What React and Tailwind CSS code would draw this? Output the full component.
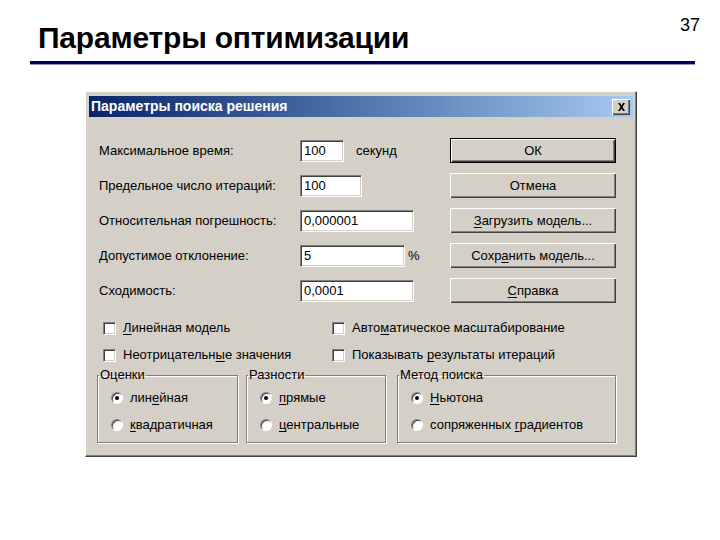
import React from 'react';

const font = { fontFamily: '"Liberation Sans", Arial, sans-serif' };

const sunken =
  'bg-white border border-t-[#808080] border-l-[#808080] border-r-white border-b-white shadow-[inset_1px_1px_0_#404040,inset_-1px_-1px_0_#d4d0c8]';

const Field = ({ value, width }) => (
  <div className={`h-[22px] ${width} ${sunken} flex items-center pl-[3px] text-[13px] leading-none`}>
    {value}
  </div>
);

const Button = ({ children, isDefault }) => (
  <div
    className={`ml-auto w-[166px] h-[25px] flex items-center justify-center text-[13px] bg-[#d4d0c8] ${
      isDefault
        ? 'border border-black shadow-[inset_1px_1px_0_#fff,inset_-1px_-1px_0_#404040,inset_-2px_-2px_0_#808080]'
        : 'shadow-[inset_1px_1px_0_#fff,inset_-1px_-1px_0_#404040,inset_-2px_-2px_0_#808080]'
    }`}
  >
    {children}
  </div>
);

const U = ({ children }) => <span className="underline underline-offset-2">{children}</span>;

const Check = ({ children }) => (
  <div className="flex items-center h-[18px]">
    <span className={`w-[13px] h-[13px] ml-[4px] mr-[7px] ${sunken}`} />
    <span className="text-[13px]">{children}</span>
  </div>
);

const Radio = ({ children, checked }) => (
  <div className="flex items-center h-[18px]">
    <span className="w-[12px] h-[12px] ml-[13px] mr-[7px] rounded-full bg-white border border-t-[#808080] border-l-[#808080] border-r-white border-b-white shadow-[inset_1px_1px_0_#404040] flex items-center justify-center">
      {checked && <span className="w-[4px] h-[4px] rounded-full bg-black" />}
    </span>
    <span className="text-[13px]">{children}</span>
  </div>
);

const Group = ({ title, width, children }) => (
  <fieldset
    className={`${width} h-[76px] border border-[#808080] shadow-[1px_1px_0_#fff,inset_1px_1px_0_#fff] pt-[6px] flex flex-col gap-[9px]`}
  >
    <legend className="ml-[1px] px-[1px] text-[13px] leading-[16px]">{title}</legend>
    {children}
  </fieldset>
);

const rows = [
  { label: 'Максимальное время:', value: '100', width: 'w-[44px]', suffix: 'секунд', gap: 'ml-[12px]', button: 'ОК', isDefault: true },
  { label: 'Предельное число итераций:', value: '100', width: 'w-[62px]', button: 'Отмена' },
  { label: 'Относительная погрешность:', value: '0,000001', width: 'w-[114px]', button: <><U>З</U>агрузить модель...</> },
  { label: 'Допустимое отклонение:', value: '5', width: 'w-[105px]', suffix: '%', gap: 'ml-[3px]', button: <>Сохр<U>а</U>нить модель...</> },
  { label: 'Сходимость:', value: '0,0001', width: 'w-[114px]', button: <><U>С</U>правка</> },
];

export default function App() {
  return (
    <div className="w-[720px] h-[540px] bg-white relative overflow-hidden" style={font}>
      {/* slide header */}
      <div className="flex items-start pl-[38px] pr-[20px] pt-[20px]">
        <h1 className="text-[30px] font-bold leading-[36px] tracking-[-0.2px] text-black">Параметры оптимизации</h1>
        <span className="ml-auto mt-[-8px] text-[18px] text-black">37</span>
      </div>
      <div className="ml-[30px] w-[665px] h-[3px] mt-[5px] bg-[#000066] shadow-[0_1px_0_#9999bb]" />

      {/* dialog */}
      <div className="ml-[85px] mt-[27px] w-[552px] h-[366px] bg-[#d4d0c8] border border-t-white border-l-white border-r-[#404040] border-b-[#404040] shadow-[inset_-1px_-1px_0_#808080] px-[3px] pt-[4px] text-black">
        <div className="h-[21px] bg-gradient-to-r from-[#0a246a] to-[#a6caf0] flex items-center pl-[2px] pr-[3px]">
          <span className="text-white font-bold text-[14px]">Параметры поиска решения</span>
          <span className="ml-auto w-[18px] h-[16px] bg-[#d4d0c8] shadow-[inset_1px_1px_0_#fff,inset_-1px_-1px_0_#404040,inset_-2px_-2px_0_#808080] flex items-center justify-center">
            <svg width="9" height="8" viewBox="0 0 9 8">
              <path d="M1 0h2l1.5 2.5L6 0h2L5.5 4 8 8H6L4.5 5.5 3 8H1l2.5-4z" fill="black" />
            </svg>
          </span>
        </div>

        <div className="pl-[10px] pr-[17px] pt-[21px]">
          <div className="flex flex-col gap-[10px]">
            {rows.map((r, i) => (
              <div key={i} className="flex items-center h-[25px] text-[13px]">
                <span className="w-[201px]">{r.label}</span>
                <Field value={r.value} width={r.width} />
                {r.suffix && <span className={r.gap}>{r.suffix}</span>}
                <Button isDefault={r.isDefault}>{r.button}</Button>
              </div>
            ))}
          </div>

          <div className="mt-[16px] grid grid-cols-[229px_1fr] gap-y-[9px]">
            <Check><U>Л</U>инейная модель</Check>
            <Check>Авто<U>м</U>атическое масштабирование</Check>
            <Check>Неотрицательн<U>ы</U>е значения</Check>
            <Check>Показывать <U>р</U>езультаты итераций</Check>
          </div>

          <div className="mt-[3px] ml-[-2px] flex gap-[8px]">
            <Group title="Оценки" width="w-[141px]">
              <Radio checked>лин<U>е</U>йная</Radio>
              <Radio><U>к</U>вадратичная</Radio>
            </Group>
            <Group title="Разности" width="w-[140px]">
              <Radio checked><U>п</U>рямые</Radio>
              <Radio><U>ц</U>ентральные</Radio>
            </Group>
            <Group title="Метод поиска" width="ml-[3px] flex-1">
              <Radio checked><U>Н</U>ьютона</Radio>
              <Radio>сопряженных <U>г</U>радиентов</Radio>
            </Group>
          </div>
        </div>
      </div>
    </div>
  );
}
